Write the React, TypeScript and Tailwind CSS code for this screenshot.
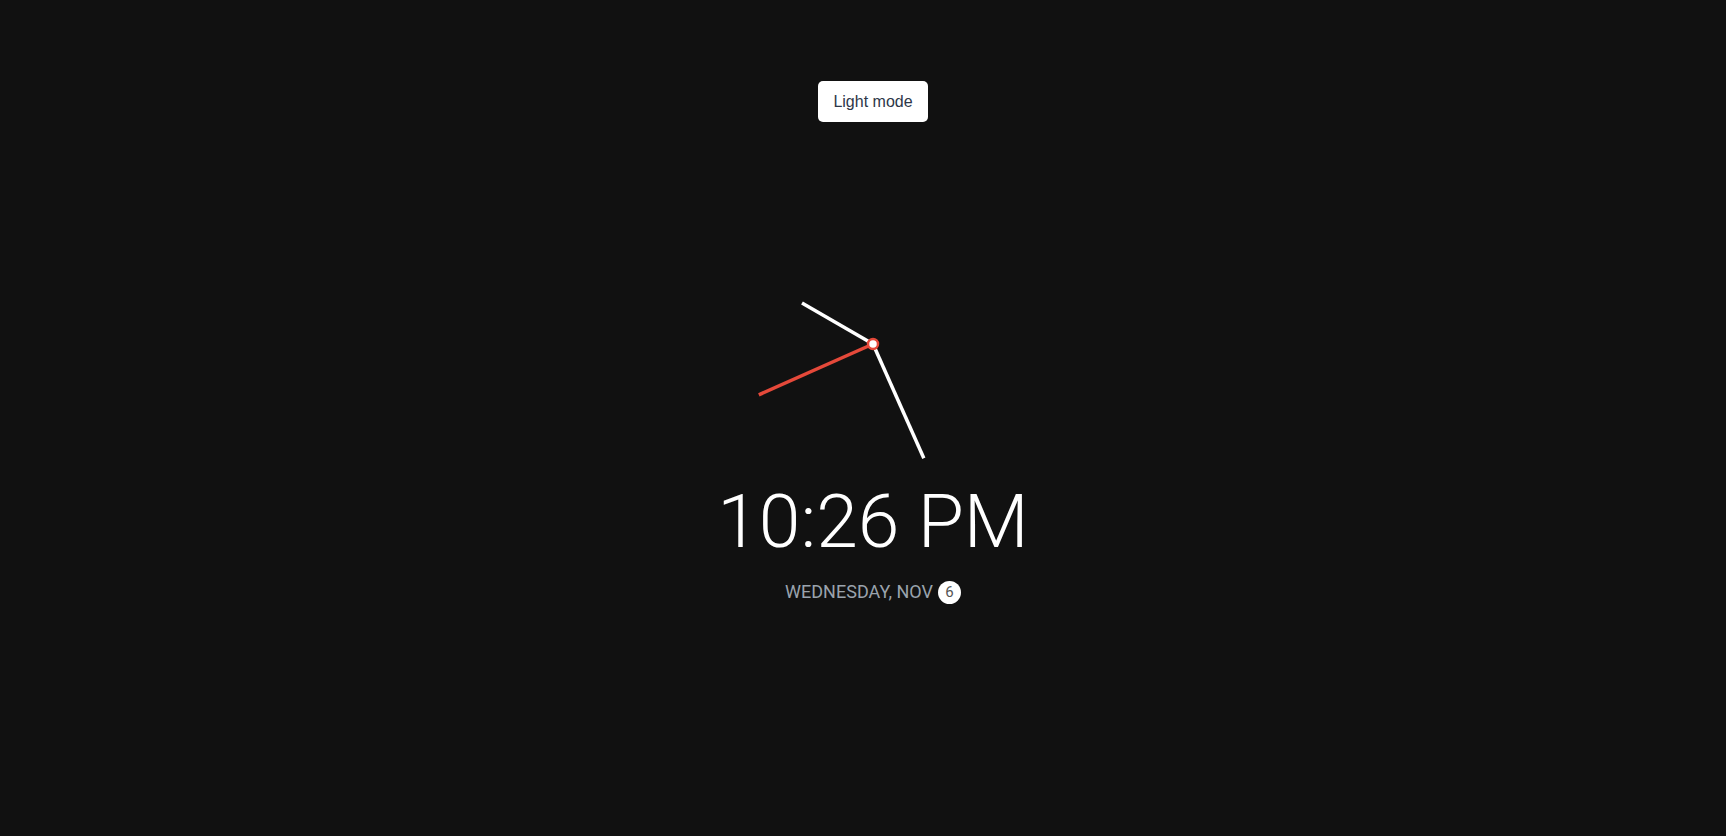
import { useState } from "react";

const CX = 130;
const CY = 130;

// hand end point from angle in degrees (0 = 12 o'clock, clockwise)
const tip = (deg: number, len: number) => {
  const r = (deg * Math.PI) / 180;
  return { x: CX + Math.sin(r) * len, y: CY - Math.cos(r) * len };
};

const Clock = () => {
  const hour = tip(300, 82);
  const minute = tip(156, 125);
  const second = tip(246, 125);

  return (
    <svg width="260" height="260" viewBox="0 0 260 260">
      <line x1={CX} y1={CY} x2={hour.x} y2={hour.y} stroke="#ffffff" strokeWidth="3.5" />
      <line x1={CX} y1={CY} x2={minute.x} y2={minute.y} stroke="#ffffff" strokeWidth="3.5" />
      <line x1={CX} y1={CY} x2={second.x} y2={second.y} stroke="#e5493a" strokeWidth="3.5" />
      <circle cx={CX} cy={CY} r="5" fill="#ffffff" stroke="#e5493a" strokeWidth="2.5" />
    </svg>
  );
};

export default function App() {
  const [dark, setDark] = useState(true);

  return (
    <div className="min-h-screen w-full bg-[#111111] pl-[20px] pt-[81px] flex flex-col items-center font-['Roboto',sans-serif]">
      <button
        onClick={() => setDark(!dark)}
        className="h-[41px] px-[15px] bg-white text-[#2d3748] rounded-[5px] text-[16px] font-['Liberation_Sans',Arial,sans-serif]"
      >
        {dark ? "Light mode" : "Dark mode"}
      </button>

      <div className="mt-[92px]">
        <Clock />
      </div>

      <div className="mt-[10px] text-white text-[75px] leading-none font-light">10:26 PM</div>

      <div className="mt-[19px] flex items-center text-[18px] leading-[28px] text-[#9aa3ad]">
        <span>WEDNESDAY, NOV</span>
        <span className="ml-[5px] w-[23px] h-[23px] rounded-full bg-white text-[#555] text-[15px] flex items-center justify-center">
          6
        </span>
      </div>
    </div>
  );
}
